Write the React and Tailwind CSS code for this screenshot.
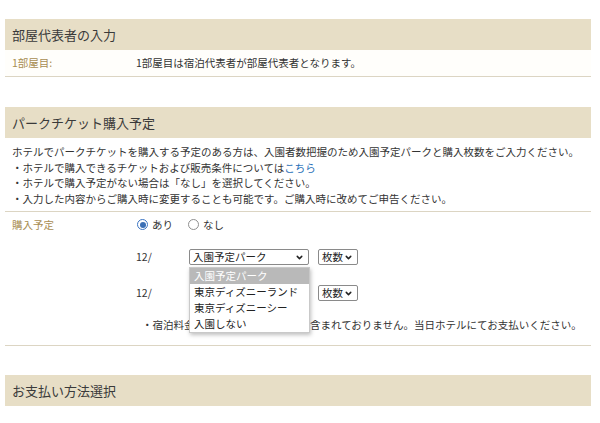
import { ChevronDown } from 'lucide-react';

const font = { fontFamily: '"Noto Sans CJK JP", "Noto Sans", sans-serif' };

function SectionHeader({ children }) {
    return (
        <div className="h-[31px] bg-[#e7dec6] pl-[7px] flex items-center text-[13px] text-[#3a3a3a]">
            {children}
        </div>
    );
}

function FakeSelect({ label, width }) {
    return (
        <div
            className={`h-[16px] ${width} border border-[#8a8a8a] rounded-[2px] bg-white flex items-center justify-between pl-[3px] pr-[4px] text-[10.5px] text-[#222] leading-none`}
        >
            <span>{label}</span>
            <ChevronDown className="w-[9px] h-[9px] text-[#222]" strokeWidth={4} />
        </div>
    );
}

export default function App() {
    const options = ['入園予定パーク', '東京ディズニーランド', '東京ディズニーシー', '入園しない'];

    return (
        <div className="w-[600px] h-[423px] bg-white overflow-hidden px-[5px] pr-[9px] pt-[19px] text-[10.5px] text-[#333]" style={font}>
            {/* 部屋代表者の入力 */}
            <SectionHeader>部屋代表者の入力</SectionHeader>
            <div className="h-[27px] flex items-center border-b border-[#dcd5c3] bg-[#fffefb]">
                <div className="w-[131px] pl-[7px] text-[#a88d52]">1部屋目:</div>
                <div>1部屋目は宿泊代表者が部屋代表者となります。</div>
            </div>

            {/* パークチケット購入予定 */}
            <div className="mt-[30px]">
                <SectionHeader>パークチケット購入予定</SectionHeader>
                <div className="pl-[7px] pt-[6px] pb-[5px] leading-[15.5px] border-b border-[#dcd5c3]">
                    <p>ホテルでパークチケットを購入する予定のある方は、入園者数把握のため入園予定パークと購入枚数をご入力ください。</p>
                    <p>・ホテルで購入できるチケットおよび販売条件については<span className="text-[#1f6fb8]">こちら</span></p>
                    <p>・ホテルで購入予定がない場合は「なし」を選択してください。</p>
                    <p>・入力した内容からご購入時に変更することも可能です。ご購入時に改めてご申告ください。</p>
                </div>

                <div className="flex pt-[5px] pb-[12px] border-b border-[#dcd5c3]">
                    <div className="w-[131px] pl-[7px] leading-[15px] text-[#a88d52]">購入予定</div>
                    <div className="flex-1">
                        <div className="h-[15px] flex items-center gap-[4px] pl-[1px]">
                            <span className="w-[11px] h-[11px] rounded-full border border-[#3b74c2] flex items-center justify-center bg-white">
                                <span className="w-[6px] h-[6px] rounded-full bg-[#3b6fb5]" />
                            </span>
                            <span>あり</span>
                            <span className="ml-[11px] w-[11px] h-[11px] rounded-full border border-[#8f8f8f] bg-white" />
                            <span>なし</span>
                        </div>

                        <div className="relative mt-[17px] flex items-center">
                            <span className="w-[53px]">12/</span>
                            <FakeSelect label="入園予定パーク" width="w-[120px]" />
                            <div className="ml-[9px]">
                                <FakeSelect label="枚数" width="w-[40px]" />
                            </div>

                            <div className="absolute left-[53px] top-[18px] w-[121px] bg-white border border-[#c9c9c9] shadow-[1px_2px_4px_rgba(0,0,0,0.25)] z-10">
                                {options.map((opt, idx) => (
                                    <div
                                        key={idx}
                                        className={`h-[16px] flex items-center pl-[4px] text-[10.5px] ${idx === 0 ? 'bg-[#b9b9b9] text-white' : 'text-[#222]'}`}
                                    >
                                        {opt}
                                    </div>
                                ))}
                            </div>
                        </div>

                        <div className="mt-[20px] flex items-center">
                            <span className="w-[53px]">12/</span>
                            <div className="w-[120px]" />
                            <div className="ml-[9px]">
                                <FakeSelect label="枚数" width="w-[40px]" />
                            </div>
                        </div>

                        <p className="mt-[16px] pl-[6px] leading-[16px]">
                            ・宿泊料金にパークチケット代金は含まれておりません。当日ホテルにてお支払いください。
                        </p>
                    </div>
                </div>
            </div>

            {/* お支払い方法選択 */}
            <div className="mt-[29px]">
                <SectionHeader>お支払い方法選択</SectionHeader>
            </div>
        </div>
    );
}
